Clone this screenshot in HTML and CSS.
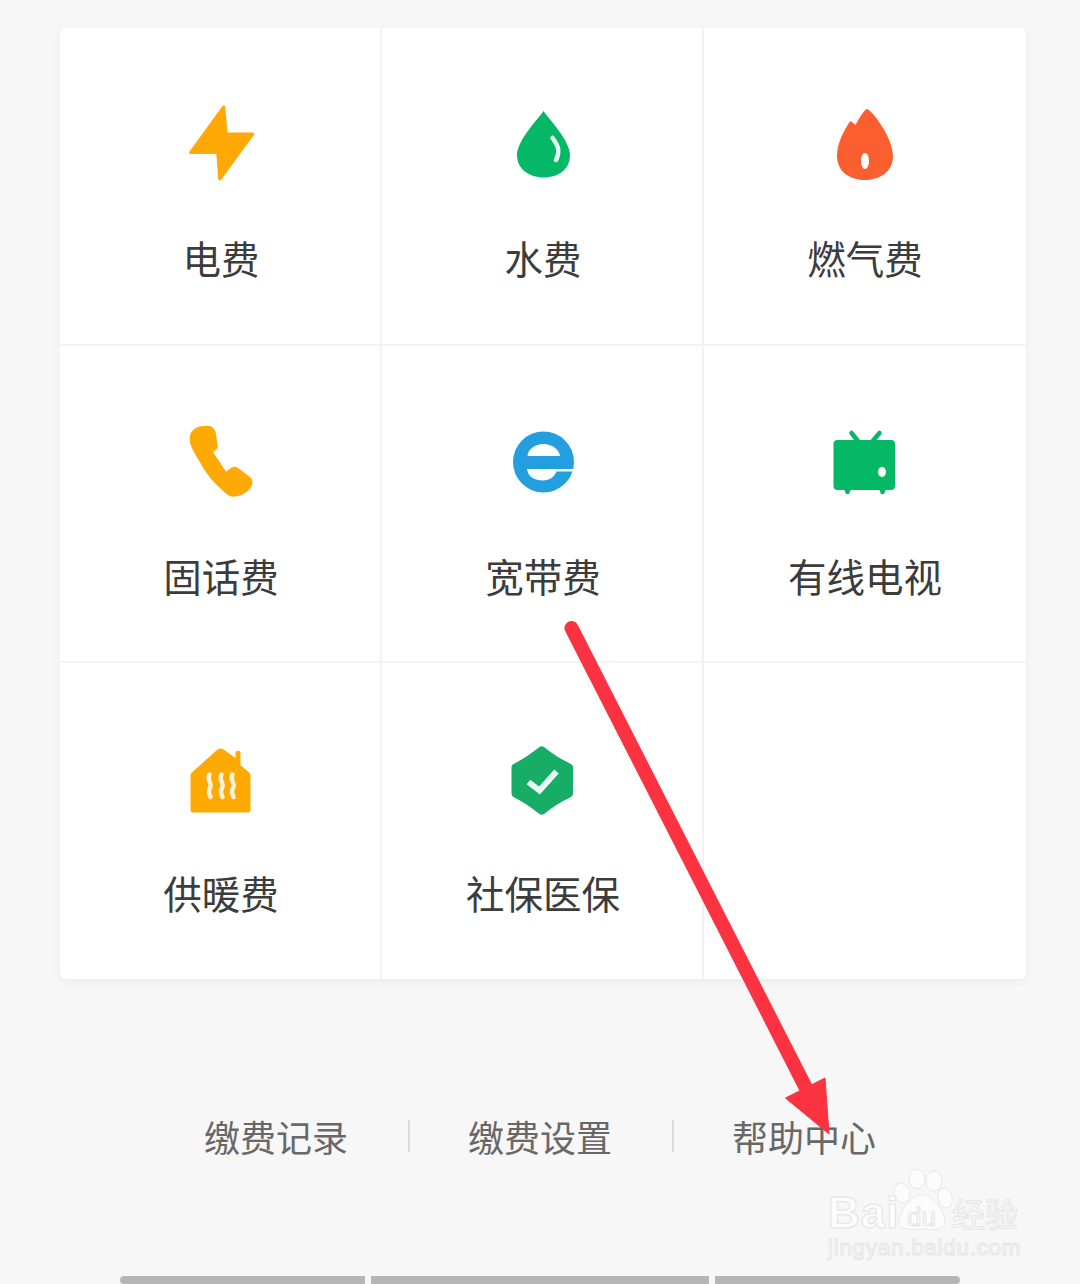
FILE: index.html
```html
<!DOCTYPE html>
<html lang="zh-CN">
<head>
<meta charset="utf-8">
<title>生活缴费</title>
<link rel="stylesheet" href="styles.css">
</head>
<body>
<div class="page">
  <section class="card">
    <div class="cell">
      <svg class="icon" viewBox="0 0 80 80"><path class="round-amber" d="M42.700 3 9.700 48.500H36.700L38.700 75 71.700 30H45.200Z"/></svg>
      <span class="label">电费</span>
    </div>
    <div class="cell">
      <svg class="icon" viewBox="0 0 80 80"><path class="fill-green" d="M40.500 7C37 13 14 36 14 51C14 65 26 73.500 41 73.500C56 73.500 67 65 67 51C67 36 44 13 40.500 7Z"/><path class="glint" d="M49.500 34C54 40 58 46 53 56"/></svg>
      <span class="label">水费</span>
    </div>
    <div class="cell">
      <svg class="icon" viewBox="0 0 80 80"><g transform="translate(-1 0)"><path class="fill-red" d="M42.800 5C41 5 35 14 31.600 21L28 18C27 16.500 26 17 25 19C19 28 13 40 13 52C13 67 25 76 41 76C57 76 69 67 69 52C69 33 47 5 42.800 5Z"/><ellipse class="hole" cx="41" cy="57" rx="4" ry="8"/></g></svg>
      <span class="label">燃气费</span>
    </div>
    <div class="cell">
      <svg class="icon" viewBox="0 0 80 80"><path class="fill-amber" d="M14 6.500C18 4 24 3.500 28 4C32 4.500 34 7 35 12L36.700 24C37 26 35 28 32 30L45 49.500C46 50 49 46 52 45C54 44.500 55 45 57 46L69 55C71.500 57 72 60 71 63C69 68 65 71 60 73C55 75 50 75.500 47 73C37 65 27 55 20 42C14 32 9 24 8.700 18C8.500 13 10 9 14 6.500Z"/></svg>
      <span class="label">固话费</span>
    </div>
    <div class="cell">
      <svg class="icon" viewBox="0 0 80 80"><circle class="fill-blue" cx="40.500" cy="40" r="30.500"/><path class="hole" d="M24.500 34C25 27 32 22 40.500 22C49 22 56 27 57 34Z"/><path class="hole" d="M24 47C25 55 32 58.500 40 58.500C47 58.500 51 55 53.500 49.500L72 49.500V47Z"/></svg>
      <span class="label">宽带费</span>
    </div>
    <div class="cell">
      <svg class="icon" viewBox="0 0 80 80"><g transform="translate(-1 0)"><path class="antenna" d="M27.500 11 35.500 21M55.500 11 47 21"/><rect class="fill-green" x="9.500" y="18" width="61.500" height="50" rx="4"/><path class="fill-green" d="M20 67H27L25 72H22ZM55 67H62L60 72H57Z"/><ellipse class="hole" cx="58" cy="50" rx="4" ry="5"/></g></svg>
      <span class="label">有线电视</span>
    </div>
    <div class="cell">
      <svg class="icon" viewBox="0 0 80 80"><g transform="translate(-1 2)"><path class="fill-amber" d="M37.500 8.500C39.500 7 41.500 7 43.500 8.500L55.500 17V12C55.500 9 60.500 9 60.500 12V24L68.500 31C70 32 70.500 33 70.500 35V69C70.500 70.500 69.500 71.500 68 71.500H13C11.500 71.500 10.500 70.500 10.500 69V35C10.500 33 11 32 12.500 31Z"/><path class="waves" d="M29.500 33.500C26 39 33 42 30 47C28 50 29 53 30.500 56M41.500 33.500C38 39 45 42 42 47C40 50 41 53 42.500 56M52.500 33.500C49 39 56 42 53 47C51 50 52 53 53.500 56"/></g></svg>
      <span class="label">供暖费</span>
    </div>
    <div class="cell">
      <svg class="icon" viewBox="0 0 80 80"><g transform="translate(0 1.500)"><path class="fill-shield" d="M36.500 6.500C38 5.500 39.500 5.500 41 6.500C49 13 58 19 68 23.500C69.500 24.500 70 25.500 70 27V52C70 54 69.500 55.500 68 56.500C58 61 49 67 41 73.500C39.500 74.500 38 74.500 36.500 73.500C28 67 20 61 10.500 56.500C9 55.500 8.500 54 8.500 52V27C8.500 25.500 9 24.500 10.500 23.500C20 19 28 13 36.500 6.500Z"/><path class="check" d="M25.500 41.500 36.500 50 53.500 31"/></g></svg>
      <span class="label">社保医保</span>
    </div>
    <div class="cell"></div>
  </section>

  <nav class="links">
    <span class="link">缴费记录</span>
    <i class="sep"></i>
    <span class="link">缴费设置</span>
    <i class="sep"></i>
    <span class="link">帮助中心</span>
  </nav>

  <div class="home-bar">
    <i class="seg seg-a"></i><i class="seg seg-b"></i><i class="seg seg-c"></i>
  </div>

  <svg class="paw" viewBox="0 0 1080 1284">
    <g class="paw-shape">
      <ellipse cx="917" cy="1179" rx="8" ry="10"/>
      <ellipse cx="934" cy="1181" rx="8" ry="10"/>
      <ellipse cx="902" cy="1193" rx="8" ry="10" transform="rotate(-15 902 1193)"/>
      <ellipse cx="945" cy="1198" rx="7" ry="10" transform="rotate(-15 945 1198)"/>
      <path d="M922 1195C934 1195 945 1212 945 1222C945 1230 934 1230 922 1229C910 1230 899 1230 899 1222C899 1212 910 1195 922 1195Z"/>
    </g>
  </svg>
  <div class="mark">
    <span class="mark-bai">Bai</span>
    <span class="mark-du">du</span>
    <span class="mark-cn">经验</span>
    <span class="mark-url">jingyan.baidu.com</span>
  </div>

  <svg class="arrow" viewBox="0 0 1080 1284">
    <path class="arrow-shaft" d="M571.500 628 808 1092"/>
    <path class="arrow-head" d="M785.500 1098 825 1078 829 1134Z"/>
  </svg>
</div>
</body>
</html>
```

FILE: styles.css
```css
* { box-sizing: border-box; }
html, body { margin: 0; padding: 0; }
body {
  background: #f7f7f7;
  font-family: "Noto Sans CJK SC", "Noto Sans", sans-serif;
}
.page {
  position: relative;
  width: 1080px;
  height: 1284px;
  padding-top: 28px;
  display: flex;
  flex-direction: column;
  align-items: center;
  overflow: hidden;
}
.card {
  align-self: flex-start;
  margin-left: 60px;
  width: 966px;
  height: 951px;
  display: grid;
  grid-template-columns: 320px 320px 1fr;
  grid-template-rows: repeat(3, 1fr);
  gap: 2px;
  background: #f3f3f3;
  border-radius: 6px;
  overflow: hidden;
  box-shadow: 0 3px 10px rgba(0, 0, 0, .05);
}
.cell {
  background: #fff;
  display: flex;
  flex-direction: column;
  align-items: center;
  padding: 76px 0 0 2px;
}
.cell:nth-child(3n) { padding-left: 0; }
.icon { width: 80px; height: 80px; display: block; }
.label {
  margin-top: 45px;
  font-size: 38.500px;
  line-height: 56px;
  color: #3c3c3c;
  white-space: nowrap;
}
.fill-amber { fill: #ffa904; }
.round-amber { fill: #ffa904; stroke: #ffa904; stroke-width: 3; stroke-linejoin: round; }
.fill-green { fill: #04b865; }
.fill-red { fill: #fc5f2f; }
.fill-blue { fill: #239fdf; }
.fill-shield { fill: #17ad66; }
.hole { fill: #fff; }
.glint { fill: none; stroke: #eafbf2; stroke-width: 4.500; stroke-linecap: round; }
.antenna { fill: none; stroke: #04b865; stroke-width: 4.500; stroke-linecap: round; }
.waves { fill: none; stroke: #fff3da; stroke-width: 4.500; stroke-linecap: round; }
.check { fill: none; stroke: #e9f9f0; stroke-width: 6; }

.links {
  margin-top: 129px;
  display: flex;
  align-items: center;
  height: 56px;
}
.link {
  font-size: 36px;
  line-height: 56px;
  color: #686868;
  white-space: nowrap;
}
.sep {
  width: 2px;
  height: 32px;
  margin: 0 58px 0 60px;
  background: #dcdcdc;
}
.home-bar {
  margin-top: auto;
  display: flex;
  gap: 6px;
}
.seg { height: 8px; background: #b6b6b6; display: block; }
.seg-a { width: 245px; border-radius: 4px 0 0 4px; }
.seg-b { width: 338px; }
.seg-c { width: 245px; border-radius: 0 4px 4px 0; }

.paw, .arrow {
  position: absolute;
  left: 0;
  top: 0;
  width: 1080px;
  height: 1284px;
  pointer-events: none;
}
.paw-shape { fill: #fcfcfc; stroke: #e8e8e8; stroke-width: 1; }
.mark { position: absolute; inset: 0; pointer-events: none; }
.mark span {
  position: absolute;
  white-space: nowrap;
  color: #fcfcfc;
  -webkit-text-stroke: 1px #e4e4e4;
  font-family: "Liberation Sans", sans-serif;
}
.mark-bai { left: 828px; top: 1188px; font-size: 44px; line-height: 50px; font-weight: 700; letter-spacing: 1px; }
.mark-du { left: 907px; top: 1202px; font-size: 26px; line-height: 30px; }
.mark span.mark-cn {
  left: 952px; top: 1190px; font-size: 33px; line-height: 46px;
  font-family: "Noto Sans CJK SC", sans-serif;
}
.mark-url { left: 828px; top: 1234px; font-size: 22.500px; line-height: 28px; letter-spacing: .7px; }
.arrow-shaft { fill: none; stroke: #fb3340; stroke-width: 14; stroke-linecap: round; }
.arrow-head { fill: #fb3340; stroke: #fb3340; stroke-width: 1; stroke-linejoin: round; }
```
